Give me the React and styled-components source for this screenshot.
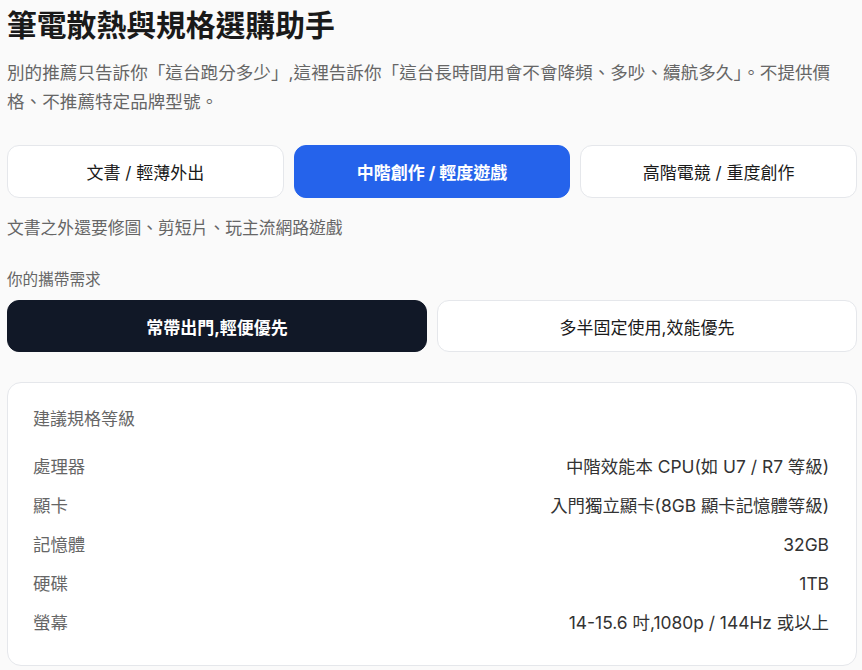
import React, { useState } from 'react';
import styled, { createGlobalStyle } from 'styled-components';

const GlobalStyle = createGlobalStyle`
  * { box-sizing: border-box; }
  body {
    margin: 0;
    background: #fafafa;
    font-family: "Inter", "Noto Sans CJK TC", "Noto Sans", sans-serif;
    color: #1f2937;
  }
`;

const Page = styled.div`
  padding: 7px 5px 20px 7px;
`;

const Title = styled.h1`
  margin: 0;
  font-size: 29.8px;
  line-height: 36px;
  font-weight: 700;
  color: #1a1a1a;
`;

const Intro = styled.p`
  margin: 15px 0 0;
  font-size: 17.6px;
  line-height: 29px;
  color: #666;
`;

const OptionRow = styled.div`
  display: grid;
  grid-template-columns: repeat(${(p) => p.$cols}, 1fr);
  gap: 10px;
  margin-top: ${(p) => p.$top}px;
`;

const Option = styled.button`
  height: ${(p) => p.$h}px;
  border-radius: 12px;
  border: 1px solid ${(p) => (p.$active ? p.$bg : '#e5e7eb')};
  background: ${(p) => (p.$active ? p.$bg : '#fff')};
  color: ${(p) => (p.$active ? '#fff' : '#1a1a1a')};
  font-family: inherit;
  font-size: 17px;
  font-weight: ${(p) => (p.$active ? 700 : 400)};
  cursor: pointer;
  padding: 0 12px;
`;

const Hint = styled.p`
  margin: 18px 0 0;
  font-size: 16.8px;
  line-height: 24px;
  color: #666;
`;

const Label = styled.div`
  margin-top: 29px;
  font-size: 15.6px;
  line-height: 22px;
  color: #666;
`;

const Card = styled.section`
  margin-top: 30px;
  background: #fff;
  border: 1px solid #e5e7eb;
  border-radius: 14px;
  padding: 24px 27px 29px 25px;
`;

const CardTitle = styled.div`
  font-size: 17px;
  line-height: 24px;
  color: #666;
  margin-bottom: 22px;
`;

const SpecList = styled.div`
  display: flex;
  flex-direction: column;
  gap: 12px;
`;

const SpecRow = styled.div`
  display: flex;
  justify-content: space-between;
  align-items: center;
  font-size: 17.4px;
  line-height: 27px;
`;

const SpecName = styled.span`
  color: #666;
`;

const SpecValue = styled.span`
  color: #333;
`;

const usages = [
  { key: 'office', label: '文書 / 輕薄外出', hint: '上網、文書、看影片,偶爾視訊會議' },
  { key: 'mid', label: '中階創作 / 輕度遊戲', hint: '文書之外還要修圖、剪短片、玩主流網路遊戲' },
  { key: 'high', label: '高階電競 / 重度創作', hint: '3A 大作、長時間算圖或 4K 剪輯' },
];

const carry = [
  { key: 'mobile', label: '常帶出門,輕便優先' },
  { key: 'desk', label: '多半固定使用,效能優先' },
];

const specs = [
  ['處理器', '中階效能本 CPU(如 U7 / R7 等級)'],
  ['顯卡', '入門獨立顯卡(8GB 顯卡記憶體等級)'],
  ['記憶體', '32GB'],
  ['硬碟', '1TB'],
  ['螢幕', '14-15.6 吋,1080p / 144Hz 或以上'],
];

const App = () => {
  const [usage, setUsage] = useState('mid');
  const [mode, setMode] = useState('mobile');
  const current = usages.find((u) => u.key === usage);

  return (
    <>
      <GlobalStyle />
      <Page>
        <Title>筆電散熱與規格選購助手</Title>
        <Intro>
          別的推薦只告訴你「這台跑分多少」,這裡告訴你「這台長時間用會不會降頻、多吵、續航多久」。不提供價格、不推薦特定品牌型號。
        </Intro>

        <OptionRow $cols={3} $top={29}>
          {usages.map((u) => (
            <Option
              key={u.key}
              $h={53}
              $bg="#2563eb"
              $active={usage === u.key}
              onClick={() => setUsage(u.key)}
            >
              {u.label}
            </Option>
          ))}
        </OptionRow>
        <Hint>{current.hint}</Hint>

        <Label>你的攜帶需求</Label>
        <OptionRow $cols={2} $top={9}>
          {carry.map((c) => (
            <Option
              key={c.key}
              $h={52}
              $bg="#111827"
              $active={mode === c.key}
              onClick={() => setMode(c.key)}
            >
              {c.label}
            </Option>
          ))}
        </OptionRow>

        <Card>
          <CardTitle>建議規格等級</CardTitle>
          <SpecList>
            {specs.map(([name, value]) => (
              <SpecRow key={name}>
                <SpecName>{name}</SpecName>
                <SpecValue>{value}</SpecValue>
              </SpecRow>
            ))}
          </SpecList>
        </Card>
      </Page>
    </>
  );
};

export default App;
